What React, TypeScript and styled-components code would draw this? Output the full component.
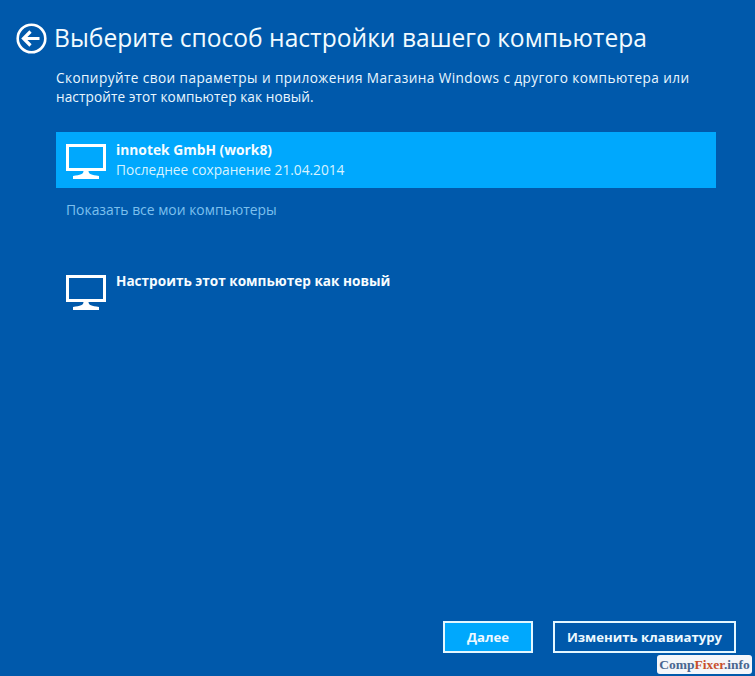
import React from 'react'
import styled, { createGlobalStyle } from 'styled-components'

const GlobalStyle = createGlobalStyle`
  html, body {
    margin: 0;
    padding: 0;
    background: #0059ab;
  }
  body {
    font-family: 'Open Sans', 'Noto Sans', sans-serif;
    color: #fff;
    overflow: hidden;
  }
`

const Page = styled.div`
  position: relative;
  box-sizing: border-box;
  width: 755px;
  height: 676px;
  background: #0059ab;
  display: flex;
  flex-direction: column;
  padding: 21px 39px 23px 16px;
`

const Header = styled.div`
  display: flex;
  align-items: center;
  gap: 7px;
  height: 34px;
`

const BackButton = styled.svg`
  width: 31px;
  height: 31px;
  flex: none;
`

const Title = styled.h1`
  margin: 0;
  font-size: 24.6px;
  font-weight: 400;
  line-height: 34px;
  white-space: nowrap;
  color: #f2fbff;
`

const Content = styled.div`
  flex: 1;
  display: flex;
  flex-direction: column;
  padding-left: 40px;
`

const Description = styled.div`
  margin-top: 13px;
  font-size: 13.6px;
  line-height: 19px;
  color: #eaf7ff;
`

const DescriptionLine = styled.div<{ $spacing: number }>`
  letter-spacing: ${({ $spacing }) => $spacing}px;
  white-space: nowrap;
`

const Item = styled.div<{ $selected?: boolean }>`
  display: flex;
  gap: 10px;
  height: 56px;
  padding: 8px 10px 0;
  box-sizing: border-box;
  background: ${({ $selected }) => ($selected ? '#00a8fd' : 'transparent')};
`

const ItemList = styled.div<{ $gap: number }>`
  margin-top: ${({ $gap }) => $gap}px;
`

const ItemText = styled.div`
  display: flex;
  flex-direction: column;
`

const ItemTitle = styled.div<{ $size: number }>`
  font-size: ${({ $size }) => $size}px;
  font-weight: 700;
  line-height: 19px;
  color: #f6fcff;
`

const ItemSubtitle = styled.div`
  font-size: 13.7px;
  line-height: 21px;
  color: #d8f3ff;
`

const MonitorIcon = styled.svg`
  width: 40px;
  height: 38px;
  flex: none;
  margin-top: 3px;
`

const ShowAll = styled.a`
  display: block;
  margin: 12px 0 0 10px;
  font-size: 13.9px;
  line-height: 20px;
  color: #7cc0ee;
`

const Footer = styled.div`
  margin-top: auto;
  display: flex;
  justify-content: flex-end;
  gap: 20px;
  margin-right: -20px;
`

const Button = styled.button<{ $primary?: boolean }>`
  height: 32px;
  padding: 0;
  width: ${({ $primary }) => ($primary ? '90px' : '183px')};
  border: 2px solid #e4f7ff;
  background: ${({ $primary }) => ($primary ? '#00a8fd' : 'transparent')};
  color: #eef9ff;
  font-family: inherit;
  font-size: 13.2px;
  font-weight: 700;
`

const Watermark = styled.div`
  position: absolute;
  left: 657px;
  top: 655px;
  width: 95px;
  height: 19px;
  box-sizing: border-box;
  border-radius: 3px;
  background: #f4f6fa;
  color: #4a6690;
  font-family: 'Liberation Serif', serif;
  font-size: 13.5px;
  font-weight: 700;
  line-height: 19px;
  text-align: center;
  white-space: nowrap;
`

const Accent = styled.span`
  color: #c8502c;
`

const Monitor: React.FC = () => (
  <MonitorIcon viewBox="0 0 40 38">
    <rect x="1.5" y="2.5" width="37" height="24" fill="none" stroke="#fff" strokeWidth="3" />
    <path d="M17.5 28h5c0 3 3 4 10.5 5v3H7v-3c7.5-1 10.5-2 10.5-5z" fill="#fff" />
  </MonitorIcon>
)

const App: React.FC = () => {
  return (
    <Page>
      <GlobalStyle />
      <Header>
        <BackButton viewBox="0 0 31 31">
          <circle cx="15.5" cy="15.5" r="13.8" fill="none" stroke="#fff" strokeWidth="2.6" />
          <path d="M14.5 8.5 7.5 15.5l7 7M8 15.5h15.5" fill="none" stroke="#fff" strokeWidth="3.2" />
        </BackButton>
        <Title>Выберите способ настройки вашего компьютера</Title>
      </Header>
      <Content>
        <Description>
          <DescriptionLine $spacing={0.42}>
            Скопируйте свои параметры и приложения Магазина Windows с другого компьютера или
          </DescriptionLine>
          <DescriptionLine $spacing={0.1}>настройте этот компьютер как новый.</DescriptionLine>
        </Description>
        <ItemList $gap={26}>
          <Item $selected>
            <Monitor />
            <ItemText>
              <ItemTitle $size={13.8}>innotek GmbH (work8)</ItemTitle>
              <ItemSubtitle>Последнее сохранение 21.04.2014</ItemSubtitle>
            </ItemText>
          </Item>
        </ItemList>
        <ShowAll>Показать все мои компьютеры</ShowAll>
        <ItemList $gap={43}>
          <Item>
            <Monitor />
            <ItemText>
              <ItemTitle $size={13.6}>Настроить этот компьютер как новый</ItemTitle>
            </ItemText>
          </Item>
        </ItemList>
        <Footer>
          <Button $primary>Далее</Button>
          <Button>Изменить клавиатуру</Button>
        </Footer>
      </Content>
      <Watermark>
        Comp<Accent>Fixer</Accent>.info
      </Watermark>
    </Page>
  )
}

export default App
